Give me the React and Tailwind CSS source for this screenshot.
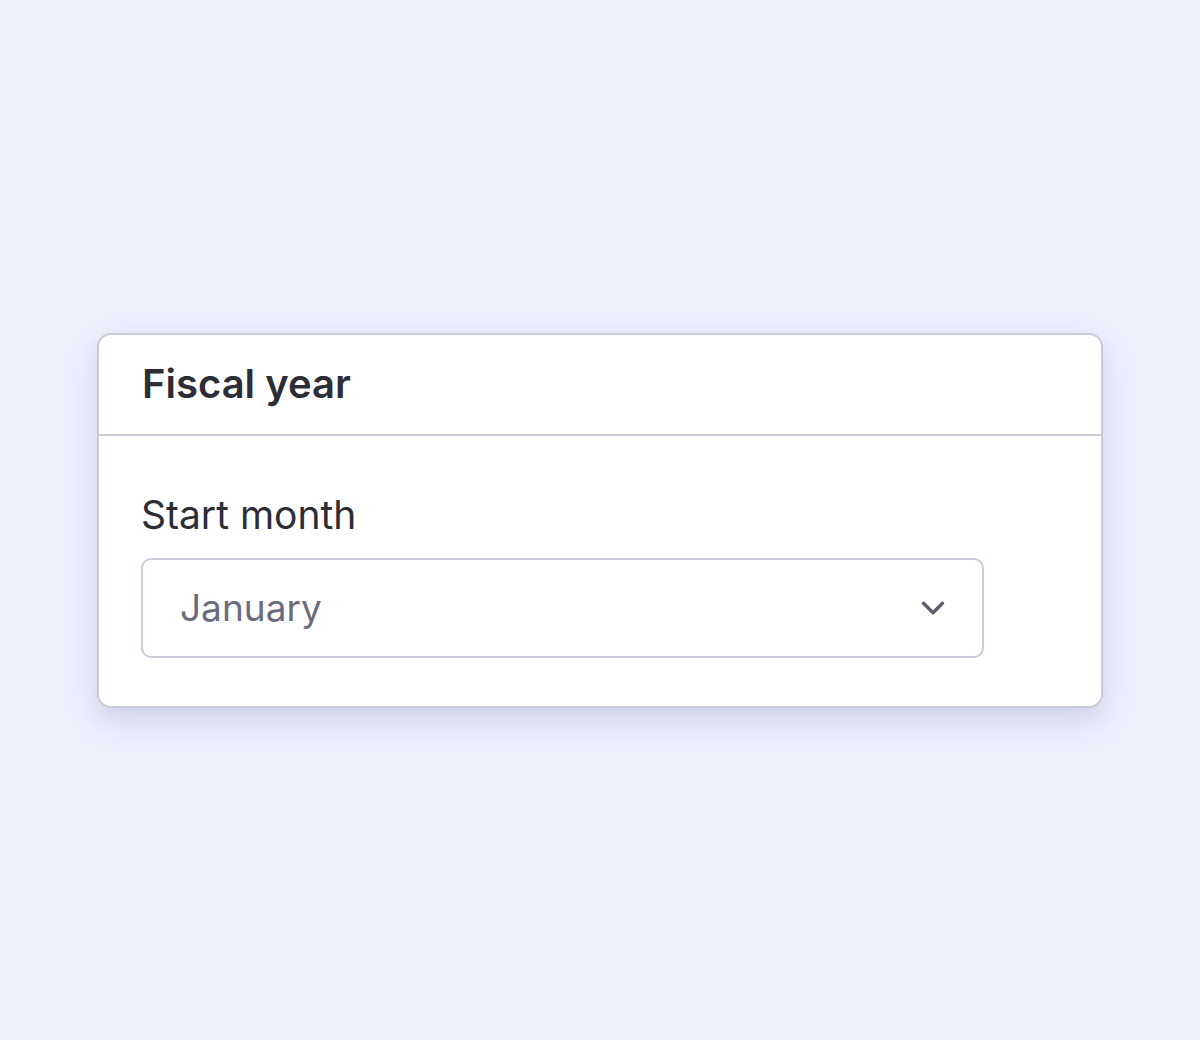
import React from 'react';

export default function App() {
  return (
    <div
      className="flex h-[1040px] w-full items-center justify-center bg-[#eef0fe]"
      style={{ fontFamily: 'Inter, "Noto Sans", sans-serif' }}
    >
      <div className="w-[1006px] rounded-[14px] border-2 border-[#c9cbd8] bg-white shadow-[0_12px_28px_rgba(120,125,160,0.28)]">
        {/* Header */}
        <div className="flex h-[101px] items-center border-b-2 border-[#c9cbd8] px-[43px]">
          <h2 className="text-[40px] font-semibold text-[#2c2d35]">Fiscal year</h2>
        </div>

        {/* Body */}
        <div className="px-[42px] pb-[48px] pt-[55px]">
          <label className="block text-[39px] leading-[48px] text-[#2c2d35]">Start month</label>
          <div className="mt-[19px] flex h-[100px] w-[843px] items-center justify-between rounded-[10px] border-2 border-[#c9cbd8] pl-[37px] pr-[30px]">
            <span className="text-[37px] text-[#6b6b7b]">January</span>
            <svg width="38" height="38" viewBox="0 0 24 24" fill="none" stroke="#5f606e" strokeWidth="2.2" strokeLinecap="round" strokeLinejoin="round">
              <path d="M6 9l6 6 6-6" />
            </svg>
          </div>
        </div>
      </div>
    </div>
  );
}
